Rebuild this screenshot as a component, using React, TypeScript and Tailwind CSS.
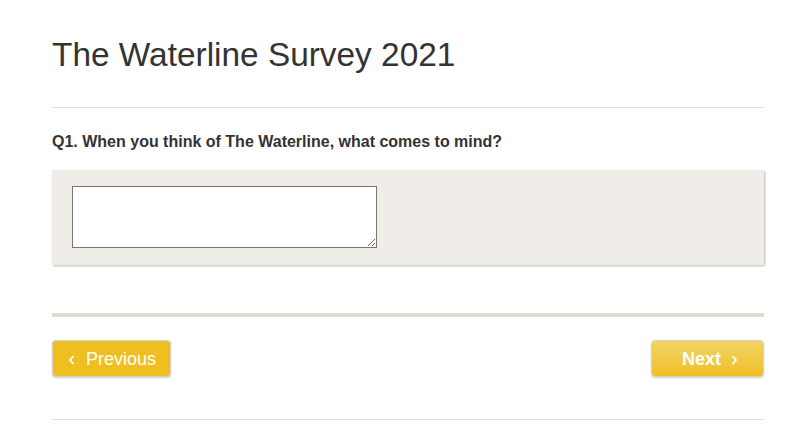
import React from 'react';

const Chevron = ({ dir }: { dir: 'left' | 'right' }) => (
    <svg width="8" height="12" viewBox="0 0 8 12" className="shrink-0">
        <polyline
            points={dir === 'left' ? '5.5,2 2,6 5.5,10' : '2.5,2 6,6 2.5,10'}
            fill="none"
            stroke="white"
            strokeWidth="1.8"
        />
    </svg>
);

const App = () => {
    return (
        <div className="min-h-screen bg-white font-['Liberation_Sans',Arial,sans-serif] text-[#333]">
            <div className="ml-[52px] w-[712px] pt-[35px]">
                <h1 className="text-[33.4px] leading-[40px] font-normal">The Waterline Survey 2021</h1>
                <div className="mt-[32px] border-t border-[#e1e1e1]" />

                <p className="mt-[24px] text-[16px] leading-[20px] font-bold">
                    Q1. When you think of The Waterline, what comes to mind?
                </p>

                <div className="mt-[18px] bg-[#f0ede9] pl-[20px] pt-[16px] pb-[17px] shadow-[1px_1px_2px_rgba(0,0,0,0.28)]">
                    <textarea className="block h-[62px] w-[305px] border border-[#767676] bg-white" />
                </div>

                <div className="mt-[48px] h-[4px] bg-[#dedbd3]" />

                <div className="mt-[23px] flex justify-between">
                    <button className="flex h-[37px] w-[119px] items-center gap-[10px] rounded-[4px] border border-[#d8d3c4] bg-[#efbf21] pl-[15px] pt-[2px] text-[18px] text-white shadow-[0_1px_2px_rgba(0,0,0,0.2)]">
                        <Chevron dir="left" />
                        <span>Previous</span>
                    </button>
                    <button className="flex h-[37px] w-[113px] items-center justify-end gap-[9px] rounded-[4px] border border-[#d8d3c4] bg-gradient-to-b from-[#f3d263] to-[#efc021] pr-[25px] pt-[2px] text-[18px] font-bold text-white shadow-[0_1px_2px_rgba(0,0,0,0.2)]">
                        <span>Next</span>
                        <Chevron dir="right" />
                    </button>
                </div>

                <div className="mt-[42px] border-t border-[#e1e1e1]" />
            </div>
        </div>
    );
};

export default App;
